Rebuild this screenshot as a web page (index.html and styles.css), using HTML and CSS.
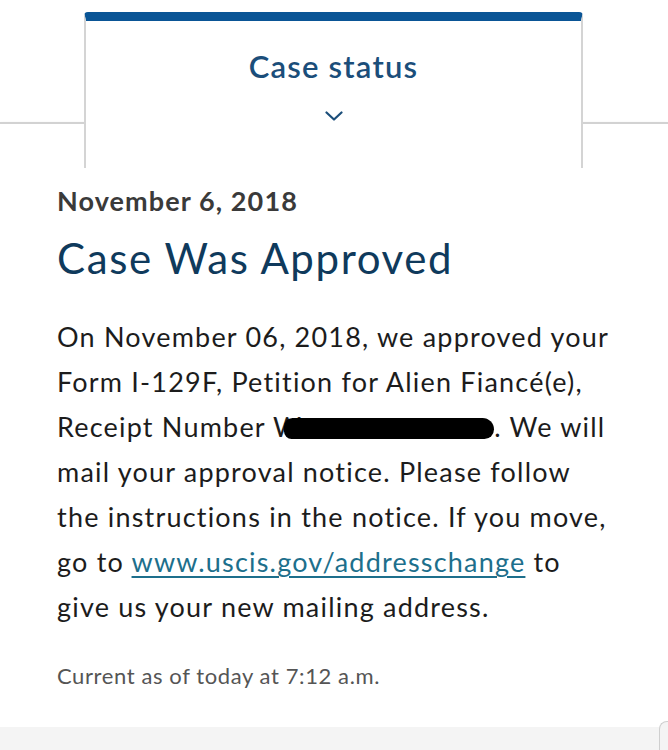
FILE: index.html
```html
<!DOCTYPE html>
<html lang="en">
<head>
    <meta charset="UTF-8">
    <meta name="viewport" content="width=device-width, initial-scale=1.0">
    <title>Case status</title>
    <link rel="stylesheet" href="styles.css">
</head>
<body>
    <div class="page">
        <div class="tab">
            <h1 class="tab-title">Case status</h1>
            <svg class="chevron" width="18" height="10" viewBox="0 0 18 10">
                <path d="M1.5 1.5 L9 8.5 L16.5 1.5" fill="none" stroke="#1b4e7a" stroke-width="2.2" stroke-linecap="round" stroke-linejoin="round"/>
            </svg>
        </div>

        <div class="card">
            <p class="date">November 6, 2018</p>
            <h2 class="status">Case Was Approved</h2>
            <p class="message">
                On November 06, 2018, we approved your<br>
                Form I-129F, Petition for Alien Fiancé(e),<br>
                Receipt Number W<span class="redacted"></span>. We will<br>
                mail your approval notice. Please follow<br>
                the instructions in the notice. If you move,<br>
                go to <a href="#">www.uscis.gov/addresschange</a> to<br>
                give us your new mailing address.
            </p>
            <p class="updated">Current as of today at 7:12 a.m.</p>
        </div>

        <div class="below">
            <div class="next-card"></div>
        </div>
    </div>
</body>
</html>
```

FILE: styles.css
```css
body {
    margin: 0;
    font-family: Lato, "Open Sans", Arial, sans-serif;
    background: #ffffff;
    overflow: hidden;
}
.page {
    width: 668px;
    height: 750px;
    display: flex;
    flex-direction: column;
    padding-top: 12px;
    box-sizing: border-box;
}
.tab {
    position: relative;
    z-index: 1;
    width: 499px;
    height: 156px;
    margin: 0 0 -46px 84px;
    box-sizing: border-box;
    background: #ffffff;
    border-top: 9px solid #0a5596;
    border-left: 2px solid #d4d4d4;
    border-right: 2px solid #d4d4d4;
    border-radius: 4px 4px 0 0;
    display: flex;
    flex-direction: column;
    align-items: center;
}
.tab-title {
    margin: 27px 0 0 0;
    font-size: 31px;
    font-weight: 600;
    letter-spacing: 1.2px;
    color: #1b4e7a;
    line-height: 36px;
}
.chevron {
    margin-top: 27px;
}
.card {
    height: 605px;
    box-sizing: border-box;
    border-top: 2px solid #d2d2d2;
    padding: 62px 10px 0 57px;
    box-shadow: 0 3px 4px rgba(0, 0, 0, 0.35);
    background: #ffffff;
}
.date {
    margin: 0;
    font-size: 27px;
    font-weight: 700;
    letter-spacing: 1.1px;
    color: #3a3a3a;
    line-height: 30px;
}
.status {
    margin: 18px 0 0 0;
    font-size: 42px;
    font-weight: 400;
    letter-spacing: 1.6px;
    color: #0f3a5c;
    line-height: 48px;
}
.message {
    margin: 32px 0 0 0;
    font-size: 27px;
    letter-spacing: 1.2px;
    line-height: 45px;
    color: #1c1c1c;
    white-space: nowrap;
}
.message a {
    color: #1d6f8c;
    text-decoration: underline;
    text-decoration-thickness: 2px;
    text-underline-offset: 4px;
}
.redacted {
    display: inline-block;
    width: 210px;
    height: 21px;
    margin-left: -18px;
    background: #000000;
    border-radius: 9px 12px 10px 8px;
    vertical-align: -2px;
}
.updated {
    margin: 34px 0 0 0;
    font-size: 22px;
    letter-spacing: 0.6px;
    color: #555555;
    line-height: 26px;
}
.below {
    flex: 1;
    background: #f4f4f4;
    display: flex;
    justify-content: flex-end;
}
.next-card {
    width: 8px;
    margin-top: -6px;
    border-left: 1px solid #cfcfcf;
    border-top: 1px solid #cfcfcf;
    border-radius: 8px 0 0 0;
    background: #f4f4f4;
}
```
